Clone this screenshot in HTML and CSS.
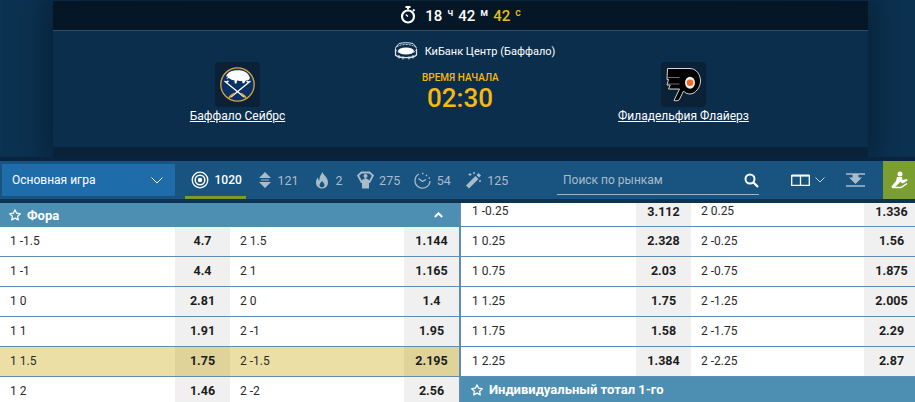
FILE: index.html
```html
<!DOCTYPE html>
<html lang="ru">
<head>
<meta charset="utf-8">
<title>Баффало Сейбрс — Филадельфия Флайерз</title>
<link rel="stylesheet" href="styles.css">
</head>
<body>
<svg class="defs" width="0" height="0" aria-hidden="true">
  <symbol id="star" viewBox="0 0 12 12"><path d="M6 .8l1.600 3.400 3.700.5-2.700 2.500.7 3.700L6 9.100l-3.300 1.800.7-3.700L.7 4.700l3.700-.5z" fill="none" stroke="currentColor" stroke-width="1.200" stroke-linejoin="round"/></symbol>
</svg>
<header class="hero">
  <section class="panel">
    <div class="timer">
      <svg class="timer-icon" viewBox="0 0 16 18"><path d="M5.500 1h5M8 1v2.500M13 3.500l1.500 1.500" stroke="#fff" stroke-width="2" fill="none"/><circle cx="8" cy="10.500" r="6" fill="none" stroke="#fff" stroke-width="2.200"/><path d="M8 10.500L5.800 8.500" stroke="#fff" stroke-width="1.300"/></svg>
      <span class="t-num">18</span><span class="t-unit">ч</span>
      <span class="t-num">42</span><span class="t-unit">м</span>
      <span class="t-num t-yellow">42</span><span class="t-unit t-yellow">с</span>
    </div>
    <div class="match">
      <div class="venue">
        <svg class="venue-icon" viewBox="0 0 24 18"><path d="M1.500 5.500L5 1.500M22.500 5.500L19 1.500M5 1.500c4-1 10-1 14 0" fill="none" stroke="#dbe6ee" stroke-width="1"/><ellipse cx="12" cy="7" rx="10.500" ry="4.500" fill="none" stroke="#dbe6ee" stroke-width="1" stroke-dasharray="2 1"/><ellipse cx="12" cy="9" rx="8" ry="3.500" fill="#fff"/><path d="M1.500 7v6c3 3.500 18 3.500 21 0V7" fill="none" stroke="#dbe6ee" stroke-width="1.200"/><path d="M5 13v3.500M9 14.500v3M15 14.500v3M19 13v3.500" stroke="#dbe6ee"/></svg>
        <span>КиБанк Центр (Баффало)</span>
      </div>
      <div class="teams">
        <a class="team">
          <span class="logo">
            <svg viewBox="0 0 35 35" width="35" height="35">
              <circle cx="17.500" cy="17.500" r="16.700" fill="#0b3164" stroke="#d9a440" stroke-width="1.300"/>
              <path d="M6 9.500C7 6 10 4 14 3.500c4-.6 9-.4 11.500 1.500 2 1.200 3.500 3 4.200 5.200.4 1.300-.2 2.300-1.200 2.800l-2.500.2c-.8 1-1.500 2-1.700 3h-1.800l-.4-2.400c-1.600.4-3.400.3-5-.2l-.6 2.800h-1.700l-.4-3.200c-2.300.2-4-.8-5.400-2.200-1.300.3-2 1-3 .6 1.500-.2 1.500-1.300 2-2z" fill="#fff"/>
              <path d="M4.500 14L24 30M30.500 14L11 30" stroke="#fff" stroke-width="1.300"/>
              <path d="M6 15.500l2.500-1.500M29 15.500L26.500 14" stroke="#fff" stroke-width="1.500"/>
              <path d="M9 31c2-3 3-3.500 5-4.500M26 31c-2-3-3-3.500-5-4.500" stroke="#d9a440" stroke-width="1.800" fill="none"/>
            </svg>
          </span>
          <span class="team-name">Баффало Сейбрс</span>
        </a>
        <div class="start">
          <div class="start-label">ВРЕМЯ НАЧАЛА</div>
          <div class="start-time">02:30</div>
        </div>
        <a class="team">
          <span class="logo">
            <svg viewBox="0 0 35 35" width="35" height="35">
              <path d="M1.500 1.500H24c6.500 0 10.500 6.500 10.500 12.500S29.500 27 24 27c-2.500 0-5-1-6.500-3l-4.200 8.700c-1 1.200-3.800 1.300-5.300.8l5.500-11.500H2.500l1.700-4H1l1.500-5.500H1z" fill="#000" stroke="#d4d4d4" stroke-width="1"/>
              <path d="M1.500 10.500h12M1.500 17h12M3.500 22.500h9" stroke="#8c8c8c" stroke-width=".8"/>
              <ellipse cx="24" cy="15.700" rx="5" ry="6" fill="#f4efe9"/>
              <circle cx="24" cy="15.700" r="3.300" fill="#f26a25"/>
            </svg>
          </span>
          <span class="team-name">Филадельфия Флайерз</span>
        </a>
      </div>
    </div>
    <div class="panel-foot"></div>
  </section>
</header>

<nav class="nav">
  <button class="select">Основная игра
    <svg viewBox="0 0 12 7" width="12" height="7"><path d="M.5.500L6 6 11.500.500" fill="none" stroke="#fff" stroke-width="1"/></svg>
  </button>
  <div class="tabs">
    <div class="tab tab-active">
      <svg viewBox="0 0 18 18" width="18" height="18"><circle cx="9" cy="9" r="7.800" fill="none" stroke="#fff" stroke-width="1.300"/><circle cx="9" cy="9" r="4.800" fill="none" stroke="#fff" stroke-width="1.500"/><circle cx="9" cy="9" r="2.200" fill="#fff"/></svg>
      <span>1020</span>
    </div>
    <div class="tab">
      <svg viewBox="0 0 14 18" width="14" height="18"><path d="M7 1l6 6H1zM7 17l-6-6h12z" fill="#a9bccb"/><path d="M3 9h8" stroke="#a9bccb"/></svg>
      <span>121</span>
    </div>
    <div class="tab tab-fire">
      <svg viewBox="0 0 14 18" width="14" height="18"><path fill-rule="evenodd" d="M7.500 1c.5 3 5.500 5 5.500 10.500 0 3.500-2.500 6-6 6s-6-2.500-6-6c0-2.500 1-4 2-5 0 1.500.5 2.500 1.500 3C4 6 6 3.500 7.500 1zM7 10c-1 1.500-2.500 2.500-2.500 4 0 1.500 1 2.300 2.500 2.300S9.500 15.500 9.500 14C9.500 12.500 8 11.500 7 10z" fill="#a9bccb"/></svg>
      <span>2</span>
    </div>
    <div class="tab">
      <svg viewBox="0 0 17 18" width="17" height="18"><path d="M4.500 1.500h8l3.500 3-3.500 6.500h-8L1 4.500z" fill="none" stroke="#a9bccb" stroke-width="1.800"/><circle cx="8.500" cy="5" r="2" fill="#a9bccb"/><path d="M5 9l3.500-2L12 9v8.500H5z" fill="#a9bccb"/></svg>
      <span>275</span>
    </div>
    <div class="tab">
      <svg viewBox="0 0 17 17" width="17" height="17"><path d="M5 2a7.500 7.500 0 1 0 11 7" fill="none" stroke="#a9bccb" stroke-width="1.300"/><path d="M4.500 6.500l4 3 3.500-2" fill="none" stroke="#a9bccb" stroke-width="1.300"/><path d="M8 1.500h1.500M12 3l1 1M14.500 6h1.500" stroke="#a9bccb" stroke-width="1.400"/></svg>
      <span>54</span>
    </div>
    <div class="tab">
      <svg viewBox="0 0 17 18" width="17" height="18"><path d="M1 14.500l9.500-9.500 3 3L4 17.500z" fill="#a9bccb"/><path d="M11.500 4l2-2L16 4.500l-2 2z" fill="#a9bccb"/><path d="M5 2v3M3.500 3.500h3M9 1v2M8 2h2M15 9v2M14 10h2" stroke="#a9bccb"/></svg>
      <span>125</span>
    </div>
  </div>
  <div class="search">
    <span>Поиск по рынкам</span>
    <svg viewBox="0 0 15 15" width="15" height="15"><circle cx="6" cy="6" r="4.500" fill="none" stroke="#fff" stroke-width="2"/><path d="M9.500 9.500L14 14" stroke="#fff" stroke-width="2.200"/></svg>
  </div>
  <div class="tools">
    <svg class="tool-cols" viewBox="0 0 19 12" width="19" height="12"><path d="M.700 1.700h17.600v9.600H.700zM9.500 1.700v9.600" fill="none" stroke="#fff" stroke-width="1.300"/><path d="M.700 1.500h17.600" stroke="#fff" stroke-width="2"/></svg>
    <svg class="tool-chev" viewBox="0 0 10 6" width="10" height="6"><path d="M.500.500L5 5 9.500.500" fill="none" stroke="#c3d2de" stroke-width="1"/></svg>
    <svg class="tool-collapse" viewBox="0 0 19 14" width="19" height="14"><path d="M0 1h19M0 13h19" stroke="#a9bccb" stroke-width="1.600"/><path d="M6.500 1h6v3.500H16L9.500 11 3 4.500h3.500z" fill="#a9bccb"/></svg>
  </div>
  <button class="pitch" aria-label="Поле">
    <svg viewBox="0 0 18 18" width="18" height="18"><circle cx="10" cy="3" r="2.500" fill="#fff"/><path d="M7 6h5l.5 3 4.500-1 .7 1.500-5 3-2.500-1.500-5 5H1l5-6z" fill="#fff"/><path d="M2 16.500h9l6-4" stroke="#fff" stroke-width="1.500" fill="none"/></svg>
  </button>
</nav>

<main class="markets">
  <div class="col col-left">
    <div class="market-head">
      <svg class="star"><use href="#star"/></svg><span>Фора</span>
      <svg class="caret" viewBox="0 0 9 6" width="9" height="6"><path d="M.800 5L4.500 1.300 8.200 5" fill="none" stroke="#fff" stroke-width="2"/></svg>
    </div>
    <div class="row"><span class="lbl">1 -1.5</span><b class="odd">4.7</b><span class="lbl">2 1.5</span><b class="odd">1.144</b></div>
    <div class="row"><span class="lbl">1 -1</span><b class="odd">4.4</b><span class="lbl">2 1</span><b class="odd">1.165</b></div>
    <div class="row"><span class="lbl">1 0</span><b class="odd">2.81</b><span class="lbl">2 0</span><b class="odd">1.4</b></div>
    <div class="row"><span class="lbl">1 1</span><b class="odd">1.91</b><span class="lbl">2 -1</span><b class="odd">1.95</b></div>
    <div class="row row-hl"><span class="lbl">1 1.5</span><b class="odd">1.75</b><span class="lbl">2 -1.5</span><b class="odd">2.195</b></div>
    <div class="row"><span class="lbl">1 2</span><b class="odd">1.46</b><span class="lbl">2 -2</span><b class="odd">2.56</b></div>
  </div>
  <div class="col col-right">
    <div class="row row-cut"><span class="lbl">1 -0.25</span><b class="odd">3.112</b><span class="lbl">2 0.25</span><b class="odd">1.336</b></div>
    <div class="row"><span class="lbl">1 0.25</span><b class="odd">2.328</b><span class="lbl">2 -0.25</span><b class="odd">1.56</b></div>
    <div class="row"><span class="lbl">1 0.75</span><b class="odd">2.03</b><span class="lbl">2 -0.75</span><b class="odd">1.875</b></div>
    <div class="row"><span class="lbl">1 1.25</span><b class="odd">1.75</b><span class="lbl">2 -1.25</span><b class="odd">2.005</b></div>
    <div class="row"><span class="lbl">1 1.75</span><b class="odd">1.58</b><span class="lbl">2 -1.75</span><b class="odd">2.29</b></div>
    <div class="row"><span class="lbl">1 2.25</span><b class="odd">1.384</b><span class="lbl">2 -2.25</span><b class="odd">2.87</b></div>
    <div class="market-head market-head-big">
      <svg class="star"><use href="#star"/></svg><span>Индивидуальный тотал 1-го</span>
    </div>
  </div>
</main>
</body>
</html>
```
FILE: styles.css
```css
* { box-sizing: border-box; }
html, body { margin: 0; height: 402px; overflow: hidden; }
body { width: 915px; background: #fff; font-family: Roboto, "Liberation Sans", sans-serif; color: #222; }
.defs { position: absolute; }

.hero { height: 157px; padding: 1px 47px 0 53px; background: linear-gradient(90deg, #0c3251 0, #0a2b47 50%, #0c3251 100%); }
.panel { width: 815px; height: 156px; display: flex; flex-direction: column; background: #0c2e4d; box-shadow: 0 0 30px 6px rgba(3, 18, 32, .55); }
.timer { height: 30px; flex: none; display: flex; align-items: flex-start; justify-content: center; padding-top: 5px; background: #051726; border-bottom: 1px solid #2c5068; color: #fff; }
.timer-icon { width: 16px; height: 18px; margin-right: 9px; }
.t-num { font-size: 15px; font-weight: 500; line-height: 21px; }
.t-unit { font-size: 10.500px; font-weight: 500; line-height: 13px; margin: 0 5px 0 5px; }
.t-num.t-yellow, .t-unit.t-yellow { color: #e9bd15; }
.t-unit.t-yellow { margin-right: 0; }
.match { flex: 1; display: flex; flex-direction: column; padding-top: 9px; }
.venue { display: flex; align-items: center; justify-content: center; height: 22px; gap: 7px; padding-left: 28px; color: #fff; font-size: 11px; }
.venue-icon { width: 24px; height: 18px; }
.teams { display: flex; }
.team { flex: 1; display: flex; flex-direction: column; align-items: center; color: #fff; }
.logo { width: 45px; height: 45px; display: flex; align-items: center; justify-content: center; background: #0a2137; border-radius: 4px; }
.team-name { margin-top: 1px; font-size: 12px; line-height: 16px; text-decoration: underline; }
.start { width: 77px; flex: none; text-align: center; color: #f6b90d; padding: 10px 1px 0 0; }
.start-label { font-size: 10px; font-weight: 500; line-height: 12px; white-space: nowrap; }
.start-time { font-size: 26px; font-weight: 500; line-height: 26px; margin-top: 1px; }
.panel-foot { height: 10px; flex: none; background: #0a2238; }

.nav { height: 46px; display: flex; align-items: center; background: #19537f; border-top: 4px solid #082440; border-bottom: 4px solid #0d3353; }
.select { width: 173px; height: 32px; margin-left: 2px; padding: 0 12px 0 10px; display: flex; align-items: center; justify-content: space-between; background: #1f6cab; border: 0; color: #fff; font: 12px Roboto, sans-serif; }
.tabs { display: flex; margin-left: 10px; height: 38px; }
.tab { display: flex; align-items: center; gap: 5.500px; margin-right: 14px; font-size: 12.500px; color: #a9bccb; }
.tab-fire { gap: 7px; }
.tab:nth-child(2) { margin-right: 16px; }
.tab-active { width: 61px; padding: 3px 0 0 6px; margin-right: 12px; font-size: 12px; color: #fff; font-weight: 500; border-bottom: 3px solid #7c9a2e; }
.search { width: 202px; height: 26px; margin: 3px 0 0 auto; padding: 0 0 2px 6px; display: flex; align-items: center; justify-content: space-between; border-bottom: 1px solid #9db4c6; color: #a9bccb; font-size: 12px; }
.tools { display: flex; align-items: center; margin-left: 32px; }
.tool-chev { margin-left: 5px; }
.tool-collapse { margin-left: 21px; }
.pitch { width: 32px; height: 38px; margin-left: 18px; padding: 0; display: flex; align-items: center; justify-content: center; background: #7a9e2f; border: 0; }

.markets { width: 919px; display: grid; grid-template-columns: 459px 2px 458px; }
.markets::before { content: ""; grid-column: 2; grid-row: 1; background: #5f8cb2; }
.col-left { grid-column: 1; grid-row: 1; }
.col-right { grid-column: 3; grid-row: 1; }
.market-head { height: 24px; display: flex; align-items: center; padding: 0 16px 0 9px; background: #4c8fb3; color: #fff; font-size: 13px; font-weight: 700; }
.star { width: 12px; height: 12px; margin-right: 6px; }
.caret { margin-left: auto; }
.market-head-big { height: 25px; padding-left: 10px; }
.row { display: grid; grid-template-columns: 175px 55px 174px 55px; height: 30px; border-bottom: 1px solid #5f8cb2; font-size: 12px; }
.col-right .row { grid-template-columns: 175px 55px 173px 55px; }
.row-cut { height: 24px; }
.lbl { padding: 4px 0 0 10px; line-height: 20px; color: #2a2a2a; }
.col-right .lbl { padding-left: 11px; }
.col-right .lbl:nth-of-type(2) { padding-left: 10px; }
.row-cut .lbl { padding-top: 0; line-height: 16px; }
.odd { background: #f0f0f0; text-align: center; font-size: 12.500px; font-weight: 700; line-height: 20px; padding-top: 4px; color: #1c1c1c; }
.row-cut .odd { padding-top: 0; line-height: 17px; }
.row-hl { background: #ecdfa6; }
.row-hl .odd { background: #e0d39a; }
```
